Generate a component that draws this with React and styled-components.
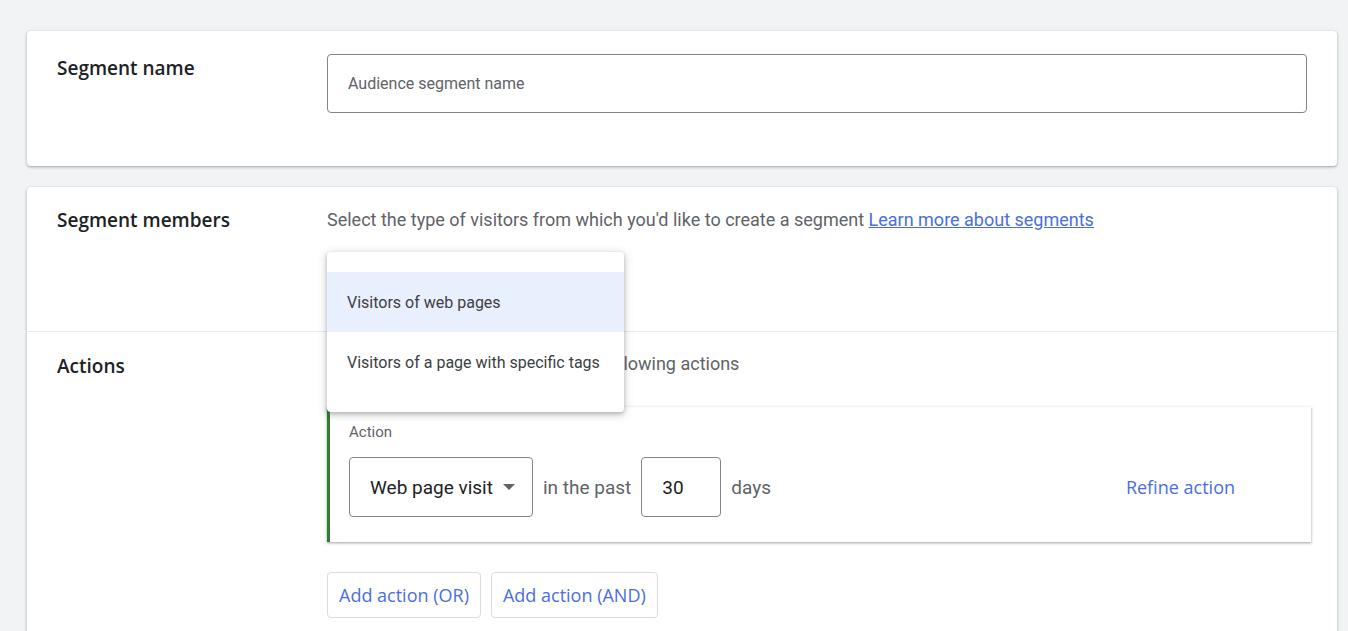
import React from 'react';
import styled, { createGlobalStyle } from 'styled-components';

const Global = createGlobalStyle`
  html, body { margin:0; padding:0; background:#f1f3f4; }
  body { font-family: Roboto, "Liberation Sans", sans-serif; overflow:hidden; }
`;

const Page = styled.div`
  padding:31px 11px 0 27px;
  display:flex; flex-direction:column; gap:21px;
`;

const Card = styled.div`
  background:#fff;
  border-radius:${p => p.$open ? '4px 4px 0 0' : '4px'};
  box-shadow:0 1px 2px rgba(60,64,67,.3), 0 1px 3px 1px rgba(60,64,67,.12);
`;

const Section = styled.div`
  display:grid;
  grid-template-columns:270px 1fr;
  padding:${p => p.$pad || '23px 30px 53px 30px'};
  border-top:${p => p.$divider ? '1px solid #e8eaed' : 'none'};
`;

const Title = styled.div`
  font-family:"Open Sans", Roboto, sans-serif;
  font-weight:600;
  font-size:19px;
  line-height:28px;
  color:#202124;
  padding-top:${p => p.$top || 0}px;
`;

const Body = styled.div`
  position:relative;
`;

const TextInput = styled.input`
  box-sizing:border-box;
  width:100%; height:59px;
  border:1px solid #80868b;
  border-radius:4px;
  padding:0 20px;
  font-family:Roboto, sans-serif;
  font-size:16px;
  color:#202124;
  outline:none;
  &::placeholder{ color:#5f6368; }
`;

const Lead = styled.div`
  font-size:18px;
  color:#5f6368;
  line-height:28px;
  white-space:nowrap;
  a{ color:#4a6ee0; text-decoration:underline; }
`;

const Menu = styled.div`
  position:absolute;
  top:${p => p.$top}px; left:0;
  width:297px;
  padding:20px 0;
  background:#fff;
  border-radius:4px;
  box-shadow:0 2px 4px rgba(60,64,67,.3), 0 2px 8px 2px rgba(60,64,67,.15);
  z-index:5;
`;

const MenuItem = styled.div`
  height:${p => p.$h}px;
  display:flex; align-items:center;
  padding-left:20px;
  font-size:16px;
  color:#3c4043;
  white-space:nowrap;
  background:${p => p.$active ? '#e8effd' : '#fff'};
`;

const ActionCard = styled.div`
  margin-top:29px;
  margin-right:-2px;
  background:#fff;
  border-left:3px solid #2e7d32;
  box-shadow:0 1px 2px rgba(60,64,67,.35), 0 1px 3px 1px rgba(60,64,67,.12);
  padding:16px 0 25px 19px;
`;

const Label = styled.div`
  font-size:15px;
  line-height:18px;
  color:#5f6368;
  margin-bottom:16px;
`;

const Row = styled.div`
  display:flex; align-items:center; gap:10px;
`;

const Box = styled.div`
  box-sizing:border-box;
  height:60px;
  width:${p => p.$w}px;
  border:1px solid #80868b;
  border-radius:4px;
  display:flex; align-items:center;
  padding-left:20px;
  font-size:19px;
  color:#202124;
  gap:10px;
`;

const Caret = styled.span`
  width:0; height:0;
  border-left:6px solid transparent;
  border-right:6px solid transparent;
  border-top:6px solid #5f6368;
`;

const Muted = styled.span`
  font-size:19px;
  color:#5f6368;
`;

const Refine = styled.span`
  margin-left:auto;
  margin-right:76px;
  font-family:"Open Sans", Roboto, sans-serif;
  font-weight:500;
  font-size:18px;
  color:#4a6ee0;
`;

const Buttons = styled.div`
  display:flex; gap:10px;
  margin-top:30px;
`;

const Button = styled.button`
  height:46px;
  padding:0 11px;
  background:#fff;
  border:1px solid #dadce0;
  border-radius:4px;
  font-family:"Open Sans", Roboto, sans-serif;
  font-weight:500;
  font-size:18px;
  color:#4a6ee0;
`;

export default function App() {
  return (
    <Page>
      <Global />
      <Card>
        <Section>
          <Title $top={0}>Segment name</Title>
          <Body>
            <TextInput placeholder="Audience segment name" />
          </Body>
        </Section>
      </Card>
      <Card $open>
        <Section $pad="19px 30px 97px 30px">
          <Title $top={0}>Segment members</Title>
          <Body>
            <Lead>
              Select the type of visitors from which you'd like to create a segment <a href="#">Learn more about segments</a>
            </Lead>
            <Menu $top={46}>
              <MenuItem $h={60} $active>Visitors of web pages</MenuItem>
              <MenuItem $h={60}>Visitors of a page with specific tags</MenuItem>
            </Menu>
          </Body>
        </Section>
        <Section $divider $pad="18px 28px 60px 30px">
          <Title $top={2}>Actions</Title>
          <Body>
            <Lead>Visitors who performed any of the following actions</Lead>
            <ActionCard>
              <Label>Action</Label>
              <Row>
                <Box $w={184}>Web page visit <Caret /></Box>
                <Muted>in the past</Muted>
                <Box $w={80}>30</Box>
                <Muted>days</Muted>
                <Refine>Refine action</Refine>
              </Row>
            </ActionCard>
            <Buttons>
              <Button>Add action (OR)</Button>
              <Button>Add action (AND)</Button>
            </Buttons>
          </Body>
        </Section>
      </Card>
    </Page>
  );
}
